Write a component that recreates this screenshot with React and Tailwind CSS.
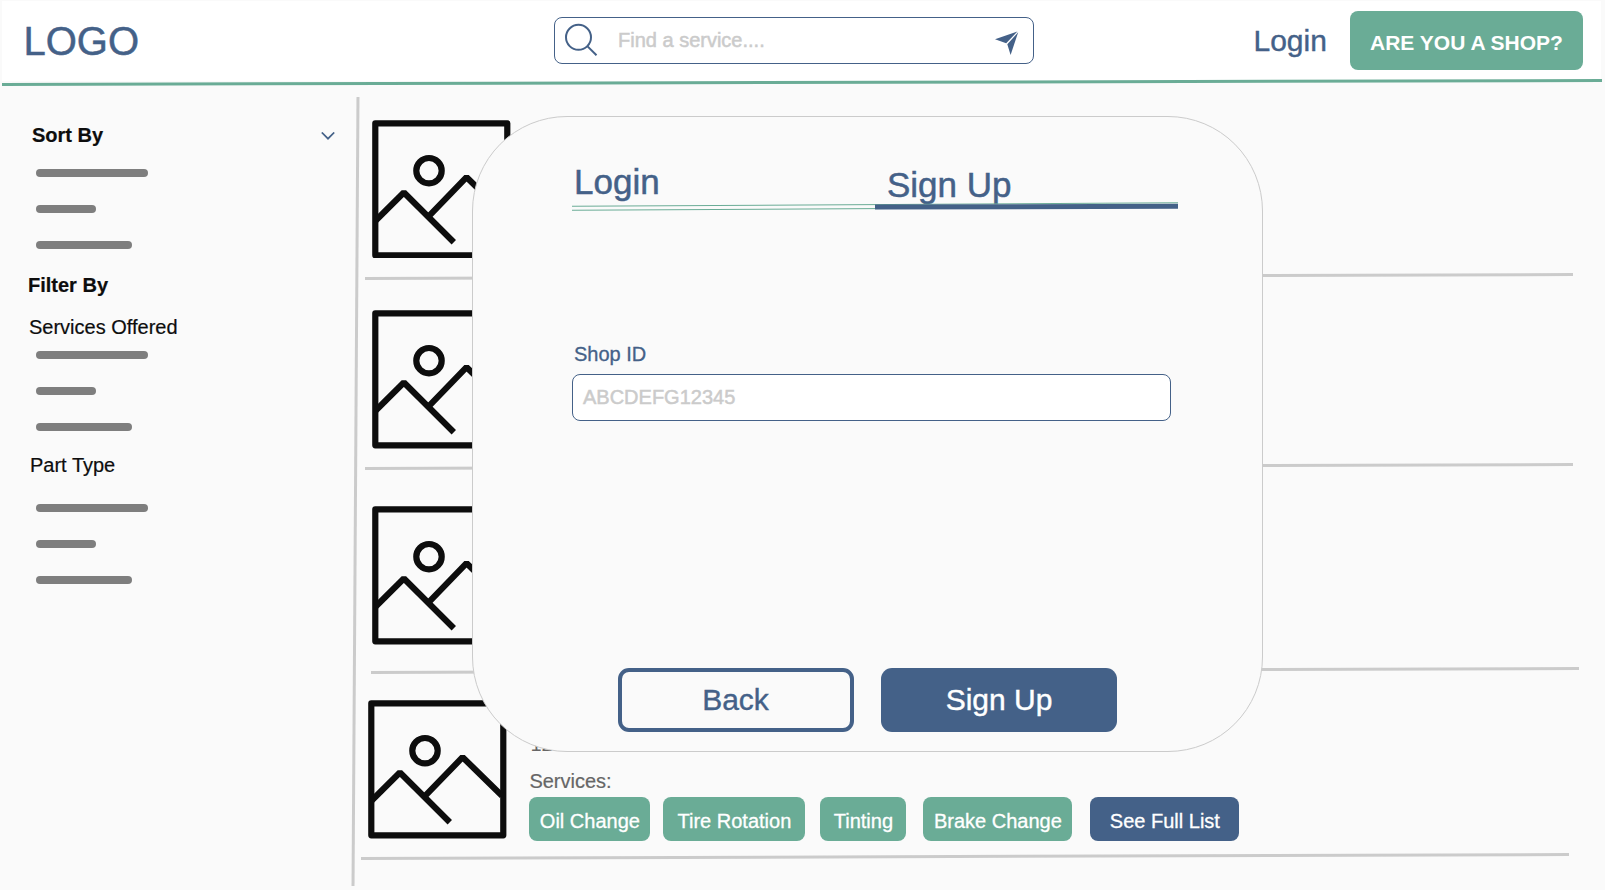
const BARS = ["w-[112px]", "w-[60px]", "w-[96px]"];

function Bars({ className }) {
  return (
    <div className={`ml-[6px] flex flex-col gap-7 ${className}`}>
      {BARS.map((w) => (
        <div key={w} className={`h-2 rounded-full bg-[#7e7e7e] ${w}`} />
      ))}
    </div>
  );
}

function Picture({ className }) {
  return (
    <svg
      className={`h-[138.4px] w-[138.4px] shrink-0 ${className}`}
      viewBox="0 0 138.4 138.4"
      fill="none"
      stroke="#0d0d0d"
      strokeWidth="6.2"
    >
      <rect x="3.3" y="3.3" width="132" height="132" strokeLinejoin="round" />
      <circle cx="57" cy="50.7" r="12.7" />
      <path d="M4 100.2 31.9 72.5 81.8 122.3M56.9 96.2 94.6 57.2 134 95.7" strokeLinejoin="bevel" />
    </svg>
  );
}

function Rule({ className }) {
  return <div className={`h-[3px] w-[1207.5px] shrink-0 rotate-[-0.18deg] bg-[#cbcbcb] ${className}`} />;
}

function Chip({ className, children }) {
  return (
    <span className={`flex h-[43.5px] items-center justify-center rounded-lg pt-[3px] text-white ${className}`}>
      {children}
    </span>
  );
}

function Header() {
  return (
    <header className="mr-1 ml-0.5 flex h-20 items-start bg-white text-[#446188]">
      <div className="mt-[18px] w-[552px] pl-[21.5px] text-[40px] leading-[44px] [-webkit-text-stroke:0.5px_#446188]">
        LOGO
      </div>
      <div className="mt-4 flex h-[47px] w-[480px] items-start rounded-lg border border-[#446188] bg-white">
        <svg className="mt-[5px] ml-[10px] h-9 w-9" viewBox="0 0 36 36" fill="none" stroke="#446188" strokeWidth="2">
          <circle cx="13.5" cy="14.3" r="12.5" />
          <path d="M22.3 23.1 31.5 32.3" />
        </svg>
        <span className="mt-[10px] ml-[17px] leading-6 text-[#cbcbcb] [-webkit-text-stroke:0.5px_#cbcbcb]">
          Find a service....
        </span>
        <svg className="mt-[13px] mr-[14px] ml-auto h-6 w-6" viewBox="0 0 24 24" fill="#446188">
          <path d="M22.4 0.4 0 8.3 11.2 12.3ZM23.2 1.2 15.6 24 12.3 13.2Z" />
        </svg>
      </div>
      <a className="mt-[22px] ml-[219.5px] text-[30px] leading-9 [-webkit-text-stroke:0.4px_#446188]">Login</a>
      <button className="mt-[10px] mr-[18px] ml-auto flex h-[59px] w-[233px] items-center justify-center rounded-lg bg-[#6aac96] pt-[5px] text-[21px] font-bold whitespace-nowrap text-white">
        ARE YOU A SHOP?
      </button>
    </header>
  );
}

function Sidebar() {
  return (
    <aside className="w-[353.5px] shrink-0 pt-[39px] pl-[30px] leading-6 text-[#0d0d0d] [-webkit-text-stroke:0.2px_#0d0d0d]">
      <div className="flex items-start justify-between pr-[19px] pl-[2px]">
        <h2 className="font-bold">Sort By</h2>
        <svg className="mt-[9px] h-2 w-[14px]" viewBox="0 0 14 8" fill="none" stroke="#446188" strokeWidth="1.7">
          <path d="M0.8 0.5 7 6.7 13.2 0.5" />
        </svg>
      </div>
      <Bars className="mt-[22px]" />
      <h2 className="-ml-[2px] mt-6 font-bold">Filter By</h2>
      <h3 className="-ml-px mt-[18px]">Services Offered</h3>
      <Bars className="mt-3" />
      <h3 className="mt-[22px]">Part Type</h3>
      <Bars className="mt-[27px]" />
    </aside>
  );
}

function Results() {
  return (
    <main className="flex min-w-0 flex-1 flex-col">
      <section className="flex h-[193.9px] flex-col justify-between pt-[36px]">
        <Picture className="ml-[15.8px]" />
        <Rule className="ml-[8.5px]" />
      </section>
      <section className="flex h-[190.2px] flex-col justify-between pt-[32.6px]">
        <Picture className="ml-[15.8px]" />
        <Rule className="ml-[8.5px]" />
      </section>
      <section className="flex h-[204px] flex-col justify-between pt-[38.4px]">
        <Picture className="ml-[15.8px]" />
        <Rule className="ml-[14.5px]" />
      </section>
      <section className="flex h-[186px] flex-col justify-between pt-[28.3px]">
        <div className="ml-[11.8px] flex">
          <Picture />
          <div className="ml-[22.7px] flex flex-col pt-[32px] leading-6 text-[#666]">
            <p className="pl-px">12</p>
            <p className="mt-[13px] [-webkit-text-stroke:0.2px_#666]">Services:</p>
            <div className="mt-[4px] flex [-webkit-text-stroke:0.3px_#fff]">
              <Chip className="w-[121px] bg-[#6aac96]">Oil Change</Chip>
              <Chip className="ml-[13px] w-[142px] bg-[#6aac96]">Tire Rotation</Chip>
              <Chip className="ml-[15px] w-[86px] bg-[#6aac96]">Tinting</Chip>
              <Chip className="ml-[17px] w-[149px] bg-[#6aac96]">Brake Change</Chip>
              <Chip className="ml-[18px] w-[149px] bg-[#446188]">See Full List</Chip>
            </div>
          </div>
        </div>
        <Rule className="ml-[4.5px]" />
      </section>
    </main>
  );
}

function SignUpDialog() {
  return (
    <div className="absolute top-[116px] left-[472px] flex h-[636px] w-[791px] flex-col rounded-[95px] border border-[#cbcbcb] bg-[#fafafa] pl-[98.5px] text-[#446188]">
      <div className="mt-[45px] flex items-start text-[35px] leading-10 [-webkit-text-stroke:0.5px_#446188]">
        <span className="w-[313px] pl-[2.5px]">Login</span>
        <span className="mt-[3px] pl-[2.5px]">Sign Up</span>
      </div>
      <div className="relative mt-[-1.5px] h-[5px] w-[606px] rotate-[-0.33deg] border-y border-[#6aac96]">
        <div className="absolute top-[-0.5px] right-0 h-[5px] w-[303px] rotate-[0.2deg] bg-[#446188]" />
      </div>
      <label className="mt-[133.5px] pl-[2.5px] text-[20px] leading-6 [-webkit-text-stroke:0.3px_#446188]">
        Shop ID
      </label>
      <div className="mt-[8px] flex h-[47px] w-[599px] items-start rounded-lg border border-[#446188] bg-white pt-[10px] pl-[10.5px] leading-6 text-[#cbcbcb] [-webkit-text-stroke:0.5px_#cbcbcb]">
        ABCDEFG12345
      </div>
      <div className="mt-[247px] ml-[46px] flex gap-[27.5px] text-[30px] leading-9">
        <button className="h-16 w-[236px] rounded-[11px] border-4 border-[#446188] [-webkit-text-stroke:0.4px_#446188]">
          Back
        </button>
        <button className="h-16 w-[236px] rounded-[11px] bg-[#446188] text-white [-webkit-text-stroke:0.4px_#fff]">
          Sign Up
        </button>
      </div>
    </div>
  );
}

export default function App() {
  return (
    <div className="relative h-[890px] w-[1605px] overflow-hidden bg-[#fafafa] pt-px font-['Liberation_Sans',Arial,sans-serif] text-[20px]">
      <Header />
      <div className="ml-[1.5px] h-[3px] w-[1600px] rotate-[-0.143deg] bg-[#6aac96]" />
      <div className="flex">
        <Sidebar />
        <div className="mt-[13px] h-[789px] w-[3px] shrink-0 rotate-[0.36deg] bg-[#cbcbcb]" />
        <Results />
      </div>
      <SignUpDialog />
    </div>
  );
}
